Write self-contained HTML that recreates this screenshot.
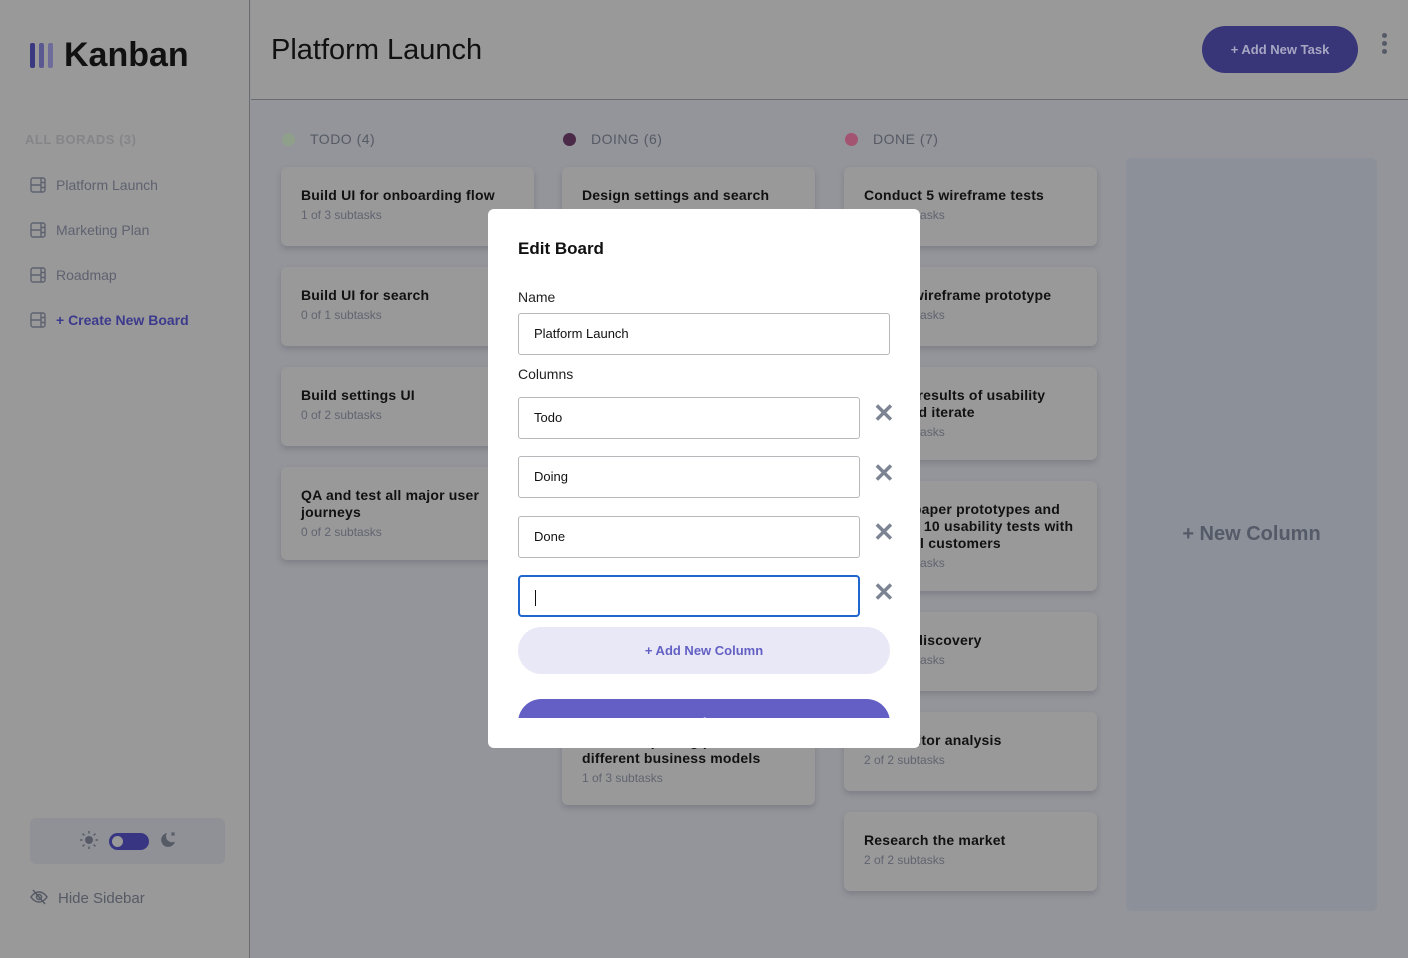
<!DOCTYPE html>
<html><head><meta charset="utf-8"><style>
*{box-sizing:border-box;margin:0;padding:0}
body{width:1408px;height:958px;overflow:hidden;position:relative;background:#94959a;font-family:"Liberation Sans",Arial,sans-serif}
.side{position:absolute;left:0;top:0;width:250px;height:958px;background:#999;border-right:1px solid #6c6c70}
.head{position:absolute;left:251px;top:0;right:0;height:100px;background:#999;border-bottom:1px solid #6c6c70}
.abs{position:absolute}
.nav{position:absolute;left:30px;font-size:14px;color:#5e6270;display:flex;align-items:center}
.nav svg{margin-right:10px}
.card{position:absolute;width:253px;background:#999;border-radius:6px;box-shadow:0 3px 6px rgba(60,60,80,.25);padding:20px 20px}
.card b{display:block;font-size:14px;color:#111;line-height:17px;letter-spacing:.2px}
.card span{display:block;font-size:12px;color:#606470;margin-top:4px}
.colh{position:absolute;top:131px;font-size:14px;color:#555a65;letter-spacing:.5px;display:flex;align-items:center}
.colh i{width:13px;height:13px;border-radius:50%;display:inline-block;margin-right:15px}
.modal{position:absolute;left:488px;top:209px;width:432px;height:539px;background:#fff;border-radius:6px}
.inp{position:absolute;left:30px;height:42px;border:1px solid #b8b8bc;border-radius:3px;font-size:13px;color:#111;padding:0 15px;line-height:40px}
.x{position:absolute;left:385px;font-size:26px;color:#7c8494;font-weight:bold}
.lbl{position:absolute;left:30px;font-size:14px;color:#222}
</style></head><body>
<div class="side">
  <div class="abs" style="left:30px;top:43px;width:5px;height:25px;background:#3a3880;border-radius:2px"></div>
  <div class="abs" style="left:39px;top:43px;width:5px;height:25px;background:#5a5890;border-radius:2px"></div>
  <div class="abs" style="left:48px;top:43px;width:5px;height:25px;background:#6e6c9a;border-radius:2px"></div>
  <div class="abs" style="left:64px;top:36px;font-size:34px;font-weight:bold;color:#111">Kanban</div>
  <div class="abs" style="left:25px;top:132px;font-size:13px;font-weight:bold;color:#858588;letter-spacing:.5px">ALL BORADS (3)</div>
  <div class="nav" style="top:177px"><svg width="16" height="16" viewBox="0 0 16 16" fill="none" stroke="#5e6270" stroke-width="1.4"><rect x="1" y="1" width="14" height="14" rx="2"/><path d="M1 8h10M11 1v14M11 5.5h4M11 10.5h4"/></svg>Platform Launch</div>
  <div class="nav" style="top:222px"><svg width="16" height="16" viewBox="0 0 16 16" fill="none" stroke="#5e6270" stroke-width="1.4"><rect x="1" y="1" width="14" height="14" rx="2"/><path d="M1 8h10M11 1v14M11 5.5h4M11 10.5h4"/></svg>Marketing Plan</div>
  <div class="nav" style="top:267px"><svg width="16" height="16" viewBox="0 0 16 16" fill="none" stroke="#5e6270" stroke-width="1.4"><rect x="1" y="1" width="14" height="14" rx="2"/><path d="M1 8h10M11 1v14M11 5.5h4M11 10.5h4"/></svg>Roadmap</div>
  <div class="nav" style="top:312px;color:#3c3a8c;font-weight:bold"><svg width="16" height="16" viewBox="0 0 16 16" fill="none" stroke="#5e6270" stroke-width="1.4"><rect x="1" y="1" width="14" height="14" rx="2"/><path d="M1 8h10M11 1v14M11 5.5h4M11 10.5h4"/></svg>+ Create New Board</div>
  <div class="abs" style="left:30px;top:818px;width:195px;height:46px;background:#8f9196;border-radius:6px"></div>
  <svg class="abs" style="left:79px;top:830px" width="20" height="20" viewBox="0 0 20 20"><circle cx="10" cy="10" r="4" fill="#555a65"/><g stroke="#555a65" stroke-width="1.5"><path d="M10 1v2.5M10 16.5V19M1 10h2.5M16.5 10H19M3.6 3.6l1.8 1.8M14.6 14.6l1.8 1.8M3.6 16.4l1.8-1.8M14.6 5.4l1.8-1.8"/></g></svg>
  <div class="abs" style="left:109px;top:833px;width:40px;height:17px;background:#383682;border-radius:9px"><div style="position:absolute;left:3px;top:3px;width:11px;height:11px;border-radius:50%;background:#999"></div></div>
  <svg class="abs" style="left:159px;top:831px" width="18" height="18" viewBox="0 0 18 18"><path d="M8 2a7 7 0 1 0 8 8.5A6 6 0 0 1 8 2z" fill="#555a65"/><path d="M12.5 1.5l3 3M15.5 1.5l-3 3" stroke="#555a65" stroke-width="1.3"/></svg>
  <svg class="abs" style="left:30px;top:889px" width="18" height="16" viewBox="0 0 18 16" fill="none" stroke="#555a65" stroke-width="1.5"><path d="M1 8s3-5 8-5 8 5 8 5-3 5-8 5-8-5-8-5z"/><circle cx="9" cy="8" r="2.5"/><path d="M3 1l12 14"/></svg>
  <div class="abs" style="left:58px;top:890px;font-size:15px;color:#555a65">Hide Sidebar</div>
</div>
<div class="head">
  <div class="abs" style="left:20px;top:34px;font-size:29px;color:#111">Platform Launch</div>
  <div class="abs" style="left:951px;top:26px;width:156px;height:47px;background:#383578;border-radius:24px;color:#a7a7c4;font-size:13px;font-weight:bold;text-align:center;line-height:47px">+ Add New Task</div>
  <div class="abs" style="left:1131px;top:33px;width:5px"><div style="width:5px;height:5px;border-radius:50%;background:#555a68;margin-bottom:3px"></div><div style="width:5px;height:5px;border-radius:50%;background:#555a68;margin-bottom:3px"></div><div style="width:5px;height:5px;border-radius:50%;background:#555a68"></div></div>
</div>
<div class="colh" style="left:282px"><i style="background:#8fa08a"></i>TODO (4)</div>
<div class="colh" style="left:563px"><i style="background:#4a2a48"></i>DOING (6)</div>
<div class="colh" style="left:845px"><i style="background:#a35470"></i>DONE (7)</div>

<div class="card" style="left:281px;top:167px;height:79px"><b>Build UI for onboarding flow</b><span>1 of 3 subtasks</span></div>
<div class="card" style="left:281px;top:267px;height:79px"><b>Build UI for search</b><span>0 of 1 subtasks</span></div>
<div class="card" style="left:281px;top:367px;height:79px"><b>Build settings UI</b><span>0 of 2 subtasks</span></div>
<div class="card" style="left:281px;top:467px;height:93px"><b>QA and test all major user journeys</b><span>0 of 2 subtasks</span></div>

<div class="card" style="left:562px;top:167px;height:79px"><b>Design settings and search</b><span>1 of 3 subtasks</span></div>
<div class="card" style="left:562px;top:712px;height:93px;padding-top:21px"><b>Research pricing points of<br>different business models</b><span>1 of 3 subtasks</span></div>

<div class="card" style="left:844px;top:167px;height:79px"><b>Conduct 5 wireframe tests</b><span>1 of 1 subtasks</span></div>
<div class="card" style="left:844px;top:267px;height:79px"><b>Create wireframe prototype</b><span>1 of 1 subtasks</span></div>
<div class="card" style="left:844px;top:367px;height:93px"><b>Review results of usability<br>tests and iterate</b><span>3 of 3 subtasks</span></div>
<div class="card" style="left:844px;top:481px;height:110px"><b>Create paper prototypes and conduct 10 usability tests with potential customers</b><span>2 of 2 subtasks</span></div>
<div class="card" style="left:844px;top:612px;height:79px"><b>Market discovery</b><span>1 of 1 subtasks</span></div>
<div class="card" style="left:844px;top:712px;height:79px"><b>Competitor analysis</b><span>2 of 2 subtasks</span></div>
<div class="card" style="left:844px;top:812px;height:79px"><b>Research the market</b><span>2 of 2 subtasks</span></div>

<div class="abs" style="left:1126px;top:158px;width:251px;height:753px;background:#8c9099;border-radius:6px;color:#555a68;font-size:20px;font-weight:bold;text-align:center;line-height:753px">+ New Column</div>

<div class="modal">
  <div class="abs" style="left:30px;top:30px;font-size:17px;font-weight:bold;color:#111">Edit Board</div>
  <div class="lbl" style="top:80px">Name</div>
  <div class="inp" style="top:104px;width:372px">Platform Launch</div>
  <div class="lbl" style="top:157px">Columns</div>
  <div class="inp" style="top:188px;width:342px">Todo</div><div class="x" style="top:189px">✕</div>
  <div class="inp" style="top:247px;width:342px">Doing</div><div class="x" style="top:249px">✕</div>
  <div class="inp" style="top:307px;width:342px">Done</div><div class="x" style="top:308px">✕</div>
  <div class="inp" style="top:366px;width:342px;border:2px solid #1f66d0;border-radius:4px"><span style="display:inline-block;width:1px;height:16px;background:#111;vertical-align:middle"></span></div><div class="x" style="top:368px">✕</div>
  <div class="abs" style="left:30px;top:418px;width:372px;height:47px;background:#e9e8f6;border-radius:24px;color:#6360c4;font-size:13px;font-weight:bold;text-align:center;line-height:47px">+ Add New Column</div>
  <div class="abs" style="left:30px;top:490px;width:372px;height:19px;overflow:hidden"><div style="height:47px;background:#635fc4;border-radius:24px;color:#fff;font-size:13px;font-weight:bold;text-align:center;line-height:47px">Save Changes</div></div>
</div>
</body></html>
